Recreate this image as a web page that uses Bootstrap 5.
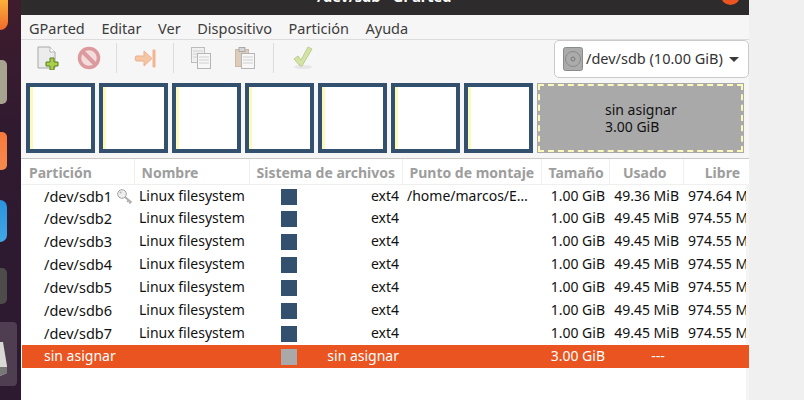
<!DOCTYPE html>
<html lang="en">
<head>
    <meta charset="UTF-8">
    <meta name="viewport" content="width=device-width, initial-scale=1.0">
    <title>GParted</title>
    <link rel="stylesheet" href="https://cdn.jsdelivr.net/npm/bootstrap@5.3.0/dist/css/bootstrap.min.css">
    <style>
        html, body { height: 400px; overflow: hidden; }
        body { font-family: "Noto Sans", sans-serif; font-size: 14px; background: #f0f0f0; color: #111; }
        .screen { height: 400px; }

        /* dock on the left, only its right edge is visible */
        .dock { width: 21px; height: 400px; flex: none; overflow: hidden; background: linear-gradient(#3f1c2d, #2f1a30 35%, #2d1a30); }
        .dock-fox { width: 8px; height: 30px; background: linear-gradient(#fbb13a, #f0692a); border-radius: 0 0 8px 0; }
        .dock-files { width: 7px; height: 44px; margin-top: 30px; background: #a8a291; border-radius: 0 5px 5px 0; }
        .dock-store { width: 7px; height: 38px; margin-top: 28px; background: linear-gradient(#f9783a, #f58a4f); border-radius: 0 5px 5px 0; }
        .dock-blue { width: 7px; height: 42px; margin-top: 30px; background: linear-gradient(#2a93dc, #43a7e6); border-radius: 0 21px 21px 0; }
        .dock-dark { width: 7px; height: 36px; margin-top: 26px; background: #4d4c4b; border-radius: 0 5px 5px 0; }
        .dock-active { width: 17px; height: 64px; margin-top: 18px; background: #4f3e51; border-radius: 0 4px 4px 0; padding-top: 20px; }

        .app-window { width: 728px; height: 400px; flex: none; background: #f6f6f6; }
        .titlebar { height: 15px; background: #2d2b2b; overflow: hidden; color: #fff; font-weight: 700; font-size: 14.5px; line-height: 16px; padding-left: 296px; padding-right: 9px; }
        .titlebar span { margin-bottom: 11px; white-space: nowrap; }
        .title-close { width: 19px; height: 19px; border-radius: 50%; background: #e95420; margin-bottom: 10px; flex: none; }

        .menu-row { height: 25px; border-bottom: 1px solid #dcdcdc; padding-left: 8px; gap: 16.6px; color: #3c3c3c; font-size: 14.5px; line-height: 26px; }
        .tool-row { height: 39px; padding-bottom: 3px; }
        .tool-ico { flex: none; display: block; }
        .tool-sep { width: 1px; height: 30px; background: #dcdcdc; flex: none; }
        .disk-pick { width: 195px; height: 38px; margin-left: auto; background: #fff; border: 1px solid #cdc9c9; border-radius: 5px; padding-left: 8px; color: #333; gap: 3px; font-size: 14.5px; align-self: flex-start; }
        .disk-caret { width: 0; height: 0; border-left: 5px solid transparent; border-right: 5px solid transparent; border-top: 5px solid #3a3a3a; margin-left: 3px; }

        .disk-map { height: 70px; margin-top: 4px; padding-left: 5px; gap: 4px; }
        .part-box { width: 69px; height: 70px; border: 4px solid #34506f; background: #fff; flex: none; }
        .part-used { width: 3px; height: 100%; background: #fbfabb; }
        .part-free { width: 207px; height: 70px; flex: none; background: #a9a9a9; outline: 2px dashed #fbfabb; outline-offset: -3px; border: 1px solid #a9a9a9; padding-left: 67px; line-height: 17px; color: #111; font-size: 14px; }

        .part-wrap { margin-top: 5px; background: #fff; border-top: 1px solid #c8c8c8; height: 242px; padding-left: 1px; position: relative; }
        .part-grid { table-layout: fixed; width: 727px; margin: 0; border-collapse: collapse; --bs-table-bg: transparent; }
        .part-grid th, .part-grid td { padding: 0; white-space: nowrap; overflow: hidden; font-size: 14px; }
        .part-grid th { height: 25px; line-height: 23px; color: #9d9d9d; font-weight: 700; font-size: 14px; border-bottom: 1px solid #efefef; border-right: 1px solid #efefef; padding-left: 7px; }
        .part-grid th:last-child { border-right: 0; }
        .part-grid th.head-size { text-align: right; padding-right: 7px; }
        .part-grid th.head-used { text-align: right; padding-right: 16px; }
        .part-grid th.head-free { text-align: right; padding-right: 9px; }
        .part-grid td { height: 23px; line-height: 22px; color: #111; }
        .cell-dev { padding-left: 22px !important; }
        .part-grid td.dev-name { font-size: 14.5px; }
        .cell-key { vertical-align: -2px; margin-left: 5px; }
        .cell-swatch { display: inline-block; width: 16px; height: 16px; background: #34506f; vertical-align: middle; margin-left: 32px; }
        .cell-fs { float: right; padding-right: 3px; }
        .cell-num { text-align: right; padding-right: 4px !important; }
        .cell-cut { text-align: left; padding-left: 5px !important; }
        .part-grid tr.row-on td { background: #e95420; color: #fff; }
        .part-grid tr.row-on .cell-swatch { background: #a9a9a9; }
        /* scrollbar sliver over the cut-off Libre column */
        .scroll-sliver { position: absolute; right: 0; top: 25px; bottom: 0; width: 3px; background: #f4f4f4; }
        .row-on-end { position: absolute; right: 0; top: 186px; width: 3px; height: 23px; background: #e95420; }
    </style>
</head>
<body>
<div class="screen d-flex">
    <div class="dock d-flex flex-column">
        <div class="dock-fox"></div>
        <div class="dock-files"></div>
        <div class="dock-store"></div>
        <div class="dock-blue"></div>
        <div class="dock-dark"></div>
        <div class="dock-active">
            <svg width="8" height="34" viewBox="0 0 8 34"><path d="M0 0 L3 0 L7 24 L7 31 L0 34 Z" fill="#d8d8d4"/><path d="M0 25 L7 25 L7 31 L0 34 Z" fill="#777"/></svg>
        </div>
    </div>

    <div class="app-window d-flex flex-column">
        <div class="titlebar d-flex align-items-end justify-content-between">
            <span>/dev/sdb - GParted</span>
            <div class="title-close"></div>
        </div>

        <div class="menu-row d-flex">
            <span>GParted</span><span>Editar</span><span>Ver</span><span>Dispositivo</span><span>Partición</span><span>Ayuda</span>
        </div>

        <div class="tool-row d-flex align-items-center">
            <!-- new -->
            <svg class="tool-ico ms-3" width="22" height="24" viewBox="0 0 22 24">
                <path d="M1 1 H13 L18 6 V22 H1 Z" fill="#ececec" stroke="#a8a8a8"/>
                <path d="M13 1 V6 H18" fill="#fff" stroke="#b5b5b5"/>
                <path d="M13 12 h4 v4 h4 v4 h-4 v4 h-4 v-4 h-4 v-4 h4 z" fill="#a9cf4e" stroke="#5d7f1a"/>
            </svg>
            <!-- delete -->
            <svg class="tool-ico" style="margin-left:18px" width="24" height="24" viewBox="0 0 24 24">
                <circle cx="12" cy="12" r="9.5" fill="#f3dcdc" stroke="#dc9a9e" stroke-width="3.5"/>
                <path d="M5.5 5.5 L18.5 18.5" stroke="#dc9a9e" stroke-width="4"/>
            </svg>
            <div class="tool-sep" style="margin-left:15px"></div>
            <!-- resize/move -->
            <svg class="tool-ico" style="margin-left:17px" width="22" height="19" viewBox="0 0 22 19">
                <path d="M2 7 H10 V2 L18 9.5 L10 17 V12 H2 Q0 9.5 2 7 Z" fill="#f4c6a5" stroke="#eeb08f"/>
                <rect x="18.5" y="0.5" width="3" height="18" rx="1" fill="#f2b48e"/>
            </svg>
            <div class="tool-sep" style="margin-left:17px"></div>
            <!-- copy -->
            <svg class="tool-ico" style="margin-left:17px" width="21" height="23" viewBox="0 0 21 23">
                <rect x="0.5" y="0.5" width="13" height="15" fill="#f0f0f0" stroke="#bdbdbd"/>
                <path d="M2 4h10M2 7h10M2 10h10" stroke="#d0d0d0"/>
                <rect x="6.5" y="6.5" width="13" height="15" fill="#f7f7f7" stroke="#b5b5b5"/>
                <path d="M8 10h10M8 13h10M8 16h10" stroke="#cfcfcf"/>
            </svg>
            <!-- paste -->
            <svg class="tool-ico" style="margin-left:23px" width="21" height="23" viewBox="0 0 21 23">
                <rect x="0.5" y="2.5" width="13" height="17" fill="#dccdbb" stroke="#cdb9a3"/>
                <rect x="4" y="0.5" width="6" height="4" fill="#d5d5d5" stroke="#a9a9a9"/>
                <rect x="6.5" y="6.5" width="13" height="15" fill="#f7f7f7" stroke="#b5b5b5"/>
                <path d="M8 10h10M8 13h10M8 16h10" stroke="#cfcfcf"/>
            </svg>
            <div class="tool-sep" style="margin-left:17px"></div>
            <!-- apply -->
            <svg class="tool-ico" style="margin-left:19px" width="21" height="24" viewBox="0 0 21 24">
                <ellipse cx="10" cy="21" rx="9" ry="2" fill="#e6e6e6"/>
                <path d="M1 13 L5 10 L8 14 L15 1 L19 3 L9 20 H7 Z" fill="#d3e2a5" stroke="#bccf8d"/>
            </svg>

            <div class="disk-pick d-flex align-items-center">
                <svg width="20" height="24" viewBox="0 0 20 24">
                    <rect x="0.5" y="0.5" width="19" height="23" rx="2" fill="#ababab" stroke="#8a8a8a"/>
                    <circle cx="10" cy="12" r="7.5" fill="none" stroke="#8a8a8a"/>
                    <circle cx="10" cy="12" r="2" fill="none" stroke="#777"/>
                </svg>
                <span>/dev/sdb (10.00 GiB)</span>
                <div class="disk-caret"></div>
            </div>
        </div>

        <div class="disk-map d-flex">
            <div class="part-box"><div class="part-used"></div></div>
            <div class="part-box"><div class="part-used"></div></div>
            <div class="part-box"><div class="part-used"></div></div>
            <div class="part-box"><div class="part-used"></div></div>
            <div class="part-box"><div class="part-used"></div></div>
            <div class="part-box"><div class="part-used"></div></div>
            <div class="part-box"><div class="part-used"></div></div>
            <div class="part-free d-flex flex-column justify-content-center"><span>sin asignar</span><span>3.00 GiB</span></div>
        </div>

        <div class="part-wrap">
            <table class="table table-borderless part-grid">
                <colgroup>
                    <col style="width:112px"><col style="width:115px"><col style="width:153px"><col style="width:139px"><col style="width:68px"><col style="width:74px"><col style="width:66px">
                </colgroup>
                <thead>
                    <tr><th>Partición</th><th>Nombre</th><th>Sistema de archivos</th><th>Punto de montaje</th><th class="head-size">Tamaño</th><th class="head-used">Usado</th><th class="head-free">Libre</th></tr>
                </thead>
                <tbody id="partRows"></tbody>
            </table>
            <div class="scroll-sliver"></div>
            <div class="row-on-end"></div>
        </div>
    </div>
</div>

<script>
    const keyIcon = '<svg class="cell-key" width="16" height="15" viewBox="0 0 16 15"><circle cx="5" cy="5" r="4.3" fill="#eeeeee" stroke="#a0a0a0"/><circle cx="3.6" cy="3.6" r="1" fill="#b5b5b5"/><path d="M8 8 L14.5 13.5 M11.5 11 L10.3 13 M13.5 12.7 L12.3 14.6" stroke="#aeaeae" stroke-width="1.8"/></svg>';
    const rows = [];
    for (let i = 1; i <= 7; i++) {
        rows.push(`<tr>
            <td class="cell-dev dev-name">/dev/sdb${i}${i === 1 ? keyIcon : ''}</td>
            <td class="cell-cut">Linux filesystem</td>
            <td><i class="cell-swatch"></i><span class="cell-fs">ext4</span></td>
            <td class="cell-cut">${i === 1 ? '/home/marcos/E…' : ''}</td>
            <td class="cell-num">1.00 GiB</td>
            <td class="cell-num">${i === 1 ? '49.36' : '49.45'} MiB</td>
            <td class="cell-cut">${i === 1 ? '974.64' : '974.55'} MiB</td>
        </tr>`);
    }
    rows.push(`<tr class="row-on">
        <td class="cell-dev">sin asignar</td>
        <td></td>
        <td><i class="cell-swatch"></i><span class="cell-fs">sin asignar</span></td>
        <td></td>
        <td class="cell-num">3.00 GiB</td>
        <td class="text-center ps-4">---</td>
        <td></td>
    </tr>`);
    document.getElementById("partRows").innerHTML = rows.join("");
</script>
<script src="https://cdn.jsdelivr.net/npm/bootstrap@5.3.0/dist/js/bootstrap.bundle.min.js"></script>
</body>
</html>
